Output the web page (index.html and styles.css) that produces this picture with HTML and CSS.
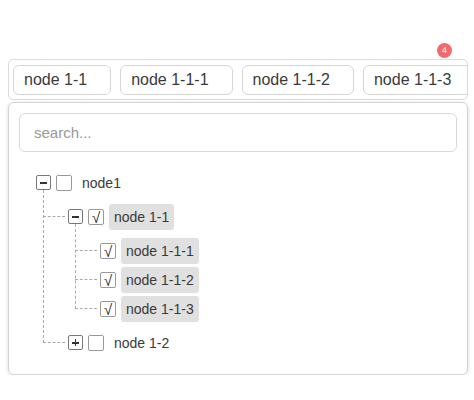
FILE: index.html
```html
<!DOCTYPE html>
<html>
<head>
<meta charset="utf-8">
<link rel="stylesheet" href="styles.css">
</head>
<body>
<div class="select">
  <div class="badge">4</div>
  <div class="tags">
    <span class="tag">node 1-1</span>
    <span class="tag">node 1-1-1</span>
    <span class="tag">node 1-1-2</span>
    <span class="tag">node 1-1-3</span>
  </div>
  <div class="panel">
    <div class="search">search...</div>
    <div class="tree">
      <div class="node">
        <div class="row"><span class="exp"></span><span class="cb"></span><span class="label">node1</span></div>
        <div class="children">
          <div class="node">
            <div class="row"><span class="exp"></span><span class="cb on">√</span><span class="label sel">node 1-1</span></div>
            <div class="children">
              <div class="node"><div class="row"><span class="cb on">√</span><span class="label sel">node 1-1-1</span></div></div>
              <div class="node"><div class="row"><span class="cb on">√</span><span class="label sel">node 1-1-2</span></div></div>
              <div class="node"><div class="row"><span class="cb on">√</span><span class="label sel">node 1-1-3</span></div></div>
            </div>
          </div>
          <div class="node">
            <div class="row"><span class="exp plus"></span><span class="cb"></span><span class="label">node 1-2</span></div>
          </div>
        </div>
      </div>
    </div>
  </div>
</div>
</body>
</html>
```
FILE: styles.css
```css
html, body {
  margin: 0;
  padding: 0;
  background: #fff;
  font-family: "Liberation Sans", Arial, sans-serif;
  color: #3a3a3a;
}
.select {
  position: relative;
  width: 460px;
  margin: 59px 0 0 8px;
}
.badge {
  position: absolute;
  left: 429px;
  top: -16px;
  width: 15px;
  height: 15px;
  border-radius: 50%;
  background: #f26a6a;
  color: #fff;
  font-size: 9px;
  line-height: 15px;
  text-align: center;
  z-index: 2;
}
.tags {
  box-sizing: border-box;
  height: 41px;
  border: 1px solid #dcdcdc;
  border-radius: 5px;
  padding: 5px 4px 4px;
  display: flex;
  gap: 9px;
  overflow: hidden;
  white-space: nowrap;
}
.tag {
  flex: none;
  box-sizing: border-box;
  height: 30px;
  line-height: 28px;
  border: 1px solid #d6d6d6;
  border-radius: 6px;
  padding: 0 23px 0 10px;
  font-size: 16px;
  color: #3a3a3a;
}
.panel {
  margin-top: 2px;
  border: 1px solid #d4d4d4;
  border-radius: 6px;
  box-shadow: 0 1px 4px rgba(0,0,0,0.14);
  padding: 10px 10px 12px;
}
.search {
  box-sizing: border-box;
  height: 39px;
  border: 1px solid #d8d8d8;
  border-radius: 6px;
  padding-left: 14px;
  line-height: 37px;
  font-size: 15px;
  color: #999;
}
.tree {
  margin-top: 16px;
  padding-left: 17px;
  font-size: 14px;
}
.row {
  position: relative;
  height: 29px;
  display: flex;
  align-items: center;
  gap: 5px;
}
.exp {
  position: relative;
  box-sizing: border-box;
  width: 15px;
  height: 15px;
  border: 1px solid #777;
  border-radius: 2px;
  background: #fff;
}
.exp::before {
  content: "";
  position: absolute;
  left: 3px;
  top: 6px;
  width: 7px;
  height: 1.5px;
  background: #333;
}
.exp.plus::after {
  content: "";
  position: absolute;
  left: 5.75px;
  top: 3px;
  width: 1.5px;
  height: 7px;
  background: #333;
}
.cb {
  box-sizing: border-box;
  width: 16px;
  height: 16px;
  border: 1px solid #999;
  border-radius: 2px;
  font-size: 15px;
  line-height: 15px;
  text-align: center;
  color: #333;
}
.label {
  padding: 0 5px;
  height: 26px;
  line-height: 26px;
  border-radius: 3px;
  color: #3a3a3a;
}
.label.sel {
  background: #e0e0e0;
}
.children {
  position: relative;
  margin-left: 7px;
  padding: 5px 0 5px 25px;
}
.children::before {
  content: "";
  position: absolute;
  left: 0;
  top: -7px;
  bottom: 19px;
  border-left: 1px dashed #aaa;
}
.children > .node > .row::before {
  content: "";
  position: absolute;
  left: -25px;
  top: 14px;
  width: 22px;
  border-top: 1px dashed #aaa;
}
```
